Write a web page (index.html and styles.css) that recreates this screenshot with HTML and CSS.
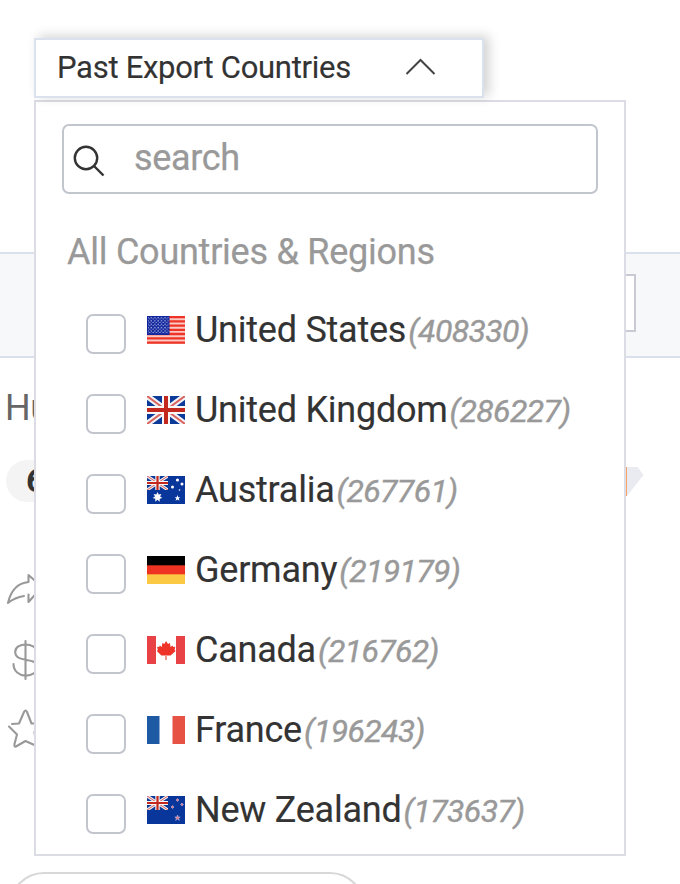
FILE: index.html
```html
<!DOCTYPE html>
<html lang="en">
<head>
<meta charset="utf-8">
<title>Past Export Countries</title>
<link rel="stylesheet" href="styles.css">
</head>
<body>
<svg class="defs" aria-hidden="true">
  <defs>
    <symbol id="jack" viewBox="0 0 38 28" preserveAspectRatio="none">
      <rect width="38" height="28" fill="#0b3a98"/>
      <path d="M0 0 38 28M38 0 0 28" stroke="#f4f4f8" stroke-width="6"/>
      <path d="M0 0 38 28M38 0 0 28" stroke="#d8655f" stroke-width="2"/>
      <path d="M19 0V28M0 14H38" stroke="#fbf7f7" stroke-width="8"/>
      <path d="M19 0V28M0 14H38" stroke="#c3281f" stroke-width="4"/>
    </symbol>
    <pattern id="stars" width="3.4" height="3.4" patternUnits="userSpaceOnUse">
      <circle cx="1" cy="1.4" r=".75" fill="#a9b2e2"/>
      <circle cx="2.7" cy="3" r=".7" fill="#a9b2e2"/>
    </pattern>
  </defs>
</svg>
<div class="page">
  <div class="band"><div class="band-input"></div></div>
  <div class="company">Hubei</div>
  <div class="meta">
    <div class="years">6 YRS</div>
    <svg class="gem" width="18" height="30" viewBox="0 0 18 30"><path d="M1 0H11.500L17.500 8 1 29Z" fill="#eaebf0"/><path d="M.5 0V29" stroke="#f8a56c"/></svg>
  </div>
  <div class="actions">
    <svg width="44" height="36" viewBox="0 0 44 36"><path d="M8 31C11 18 18 11 28.500 10V3L42 15 28.500 30V22.500M8 31C13 27 18 25 24 24"/></svg>
    <svg width="44" height="44" viewBox="0 0 44 44"><path d="M25.500 3V41M37 14C36 4 15 4 15.200 14 15.500 26 37 18 37 29 37 41 13.500 41 13.500 26"/></svg>
    <svg width="44" height="44" viewBox="0 0 44 44"><path d="M12 16 19 15.500 24 4Q25.500 1 27 4L31.500 15.500H42L34.500 24 36.500 38 25.500 33 16 38.500Q14 39 14.500 36L17 26.500 9 18.500"/></svg>
  </div>
  <div class="chip"></div>
</div>

<div class="dropdown">
  <div class="toggle">
    <span class="toggle-text">Past Export Countries</span>
    <svg class="chevron" width="32" height="20" viewBox="0 0 32 20"><path d="M1.500 16 15.500 2 29.500 16"/></svg>
  </div>
  <div class="panel">
    <div class="search">
      <svg width="34" height="34" viewBox="0 0 34 34"><circle cx="14" cy="14" r="11.200"/><path d="M22 22 31.500 31.500"/></svg>
      <span class="placeholder">search</span>
    </div>
    <div class="group">All Countries &amp; Regions</div>
    <div class="list">
      <div class="row"><i class="box"></i>
        <svg class="flag" viewBox="0 0 38 28"><rect width="38" height="28" fill="#fbc9c3"/><path d="M0 1.200H38M0 5.400H38M0 9.600H38M0 13.800H38M0 18H38M0 22.300H38M0 26.600H38" stroke="#ee3426" stroke-width="2.300"/><rect width="22.500" height="19" fill="#10249c"/><rect x="1" y="1" width="20.500" height="17" fill="url(#stars)"/></svg>
        <span class="name">United States</span><em class="count">(408330)</em></div>
      <div class="row"><i class="box"></i>
        <svg class="flag" viewBox="0 0 38 28"><use href="#jack" width="38" height="28"/></svg>
        <span class="name">United Kingdom</span><em class="count">(286227)</em></div>
      <div class="row"><i class="box"></i>
        <svg class="flag" viewBox="0 0 38 28"><rect width="38" height="28" fill="#08369a"/><use href="#jack" width="21" height="14"/><g fill="#fff"><path d="m10.500 16 1.200 2.600 2.700-.7-1.300 2.600 2.300 1.600-2.700.7v2.900l-2.200-1.900-2.200 1.900v-2.900l-2.700-.7L8 20.500l-1.400-2.600 2.700.7Z"/><path d="m30.500 19 .8 2.200h2l-1.500 1.300.6 2.200-1.900-1.200-1.900 1.200.6-2.200-1.500-1.300h2Z"/><circle cx="30.500" cy="4" r="1.600"/><circle cx="25.500" cy="11" r="1.500"/><circle cx="35" cy="8" r="1.500"/><circle cx="32.500" cy="14" r=".8"/></g></svg>
        <span class="name">Australia</span><em class="count">(267761)</em></div>
      <div class="row"><i class="box"></i>
        <svg class="flag" viewBox="0 0 38 28"><rect width="38" height="28" fill="#fbc944"/><rect width="38" height="18.300" fill="#ee3323"/><rect width="38" height="9.300"/></svg>
        <span class="name">Germany</span><em class="count">(219179)</em></div>
      <div class="row"><i class="box"></i>
        <svg class="flag" viewBox="0 0 38 28"><rect width="38" height="28" fill="#fff"/><path d="M0 0H9V28H0ZM29 0H38V28H29Z" fill="#e84247"/><path d="m19 5 2 3 2-1 .5 4 2-1.500.8 1.500 2-.2-.7 3.200 1 1-5 4.500H14.400L9.800 15l1-1-.7-3.200 2 .2.800-1.500 1.900 1.500.5-4 2 1Z" fill="#ee3428"/><path d="M19 19V24" stroke="#f09a94" stroke-width="2"/></svg>
        <span class="name">Canada</span><em class="count">(216762)</em></div>
      <div class="row"><i class="box"></i>
        <svg class="flag" viewBox="0 0 38 28"><rect width="38" height="28" fill="#fff"/><rect width="12.500" height="28" fill="#1e5aa3"/><rect x="25.500" width="12.500" height="28" fill="#e65344"/></svg>
        <span class="name">France</span><em class="count">(196243)</em></div>
      <div class="row"><i class="box"></i>
        <svg class="flag" viewBox="0 0 38 28"><rect width="38" height="28" fill="#08369a"/><use href="#jack" width="21" height="14"/><g fill="#e5788a" stroke="#b9b8dc" stroke-width=".6"><path d="m30.500 19 .7 2h2l-1.500 1.300.6 2-1.800-1.200-1.800 1.200.6-2-1.500-1.300h2Z"/><path d="m30.500 2.500 1.500 1.500-1.500 1.500-1.500-1.500ZM25.500 9.500 27 11l-1.500 1.500L24 11ZM35 7l1.500 1.500L35 10l-1.500-1.500Z"/></g></svg>
        <span class="name">New Zealand</span><em class="count">(173637)</em></div>
    </div>
  </div>
</div>
</body>
</html>
```
FILE: styles.css
```css
* { box-sizing: border-box; }
body {
  margin: 0;
  width: 680px;
  height: 884px;
  overflow: hidden;
  position: relative;
  background: #fff;
  font-family: Roboto, "Liberation Sans", sans-serif;
  color: #333;
}
svg { display: block; flex: none; }
.defs { position: absolute; width: 0; height: 0; }

/* Page behind the dropdown */
.page { height: 884px; padding-top: 252px; overflow: hidden; }
.band {
  height: 106px;
  padding: 20px 44px 0 0;
  border: solid #dae0ec;
  border-width: 2px 0;
  background: #f7f8fa;
}
.band-input {
  width: 300px;
  height: 58px;
  margin-left: auto;
  border: 2px solid #c9cad3;
  background: #fff;
}
.company {
  margin-top: 29px;
  padding-left: 5px;
  height: 42px;
  line-height: 42px;
  font-size: 36px;
  letter-spacing: -.5px;
  color: #666;
}
.meta {
  display: flex;
  justify-content: space-between;
  margin-top: 31px;
  padding: 0 36px 0 6px;
}
.years {
  width: 130px;
  height: 42px;
  padding-left: 20px;
  border-radius: 21px;
  background: #f4f4f4;
  font-size: 34px;
  font-weight: 700;
  line-height: 40px;
}
.gem { margin-top: 7px; }
.actions {
  display: grid;
  gap: 28px;
  margin-top: 70px;
  fill: none;
  stroke: #999;
  stroke-width: 2.1;
  stroke-linecap: round;
  stroke-linejoin: round;
}
.actions svg:nth-child(2) { margin-top: 2px; }
.actions svg:nth-child(3) { margin-top: -2px; }
.chip {
  width: 356px;
  height: 70px;
  margin: 120px 0 0 9px;
  border: 2px solid #d8d8d8;
  border-radius: 35px;
}

/* Dropdown */
.dropdown {
  position: absolute;
  top: 38px;
  left: 34px;
  width: 592px;
}
.toggle {
  position: relative;
  z-index: 1;
  display: flex;
  align-items: center;
  justify-content: space-between;
  width: 450px;
  height: 60px;
  padding: 0 45px 0 21px;
  border: 2px solid #dce2ed;
  background: #fff;
  box-shadow: 5px -2px 11px rgba(0, 0, 0, .18);
}
.toggle-text {
  font-size: 31px;
  line-height: 58px;
  letter-spacing: -.29px;
  white-space: nowrap;
  -webkit-text-stroke: .15px;
}
.chevron { fill: none; stroke: #444; stroke-width: 2; }
.panel {
  height: 756px;
  margin-top: 2px;
  padding: 22px 26px 0;
  border: 2px solid #dcdde4;
  background: #fff;
}
.search {
  display: flex;
  align-items: center;
  gap: 28px;
  height: 70px;
  padding-left: 8px;
  border: 2px solid #c1c5cc;
  border-radius: 7px;
}
.search svg { fill: none; stroke: #333; stroke-width: 2.4; margin-top: 4px; }
.placeholder {
  margin-top: -2px;
  font-size: 36px;
  line-height: 66px;
  letter-spacing: -.35px;
  color: #999;
  -webkit-text-stroke: .25px;
}
.group {
  margin-top: 36px;
  padding-left: 5px;
  height: 44px;
  line-height: 44px;
  font-size: 36px;
  letter-spacing: -.25px;
  color: #999;
  -webkit-text-stroke: .25px;
}
.list { margin: 20px 0 0 24px; display: grid; grid-auto-rows: 80px; }
.row { display: flex; align-items: center; height: 80px; white-space: nowrap; }
.box {
  flex: none;
  width: 40px;
  height: 40px;
  border: 2px solid #c3c5cd;
  border-radius: 7px;
}
.flag { width: 38px; height: 28px; margin: -8px 10px 0 21px; }
.name {
  margin-top: -8px;
  font-size: 36px;
  line-height: 44px;
  letter-spacing: -.24px;
  -webkit-text-stroke: .15px;
}
.count {
  margin: -6px 0 0 2px;
  font-size: 32px;
  line-height: 44px;
  letter-spacing: -.65px;
  color: #999;
  -webkit-text-stroke: .4px;
}
```
